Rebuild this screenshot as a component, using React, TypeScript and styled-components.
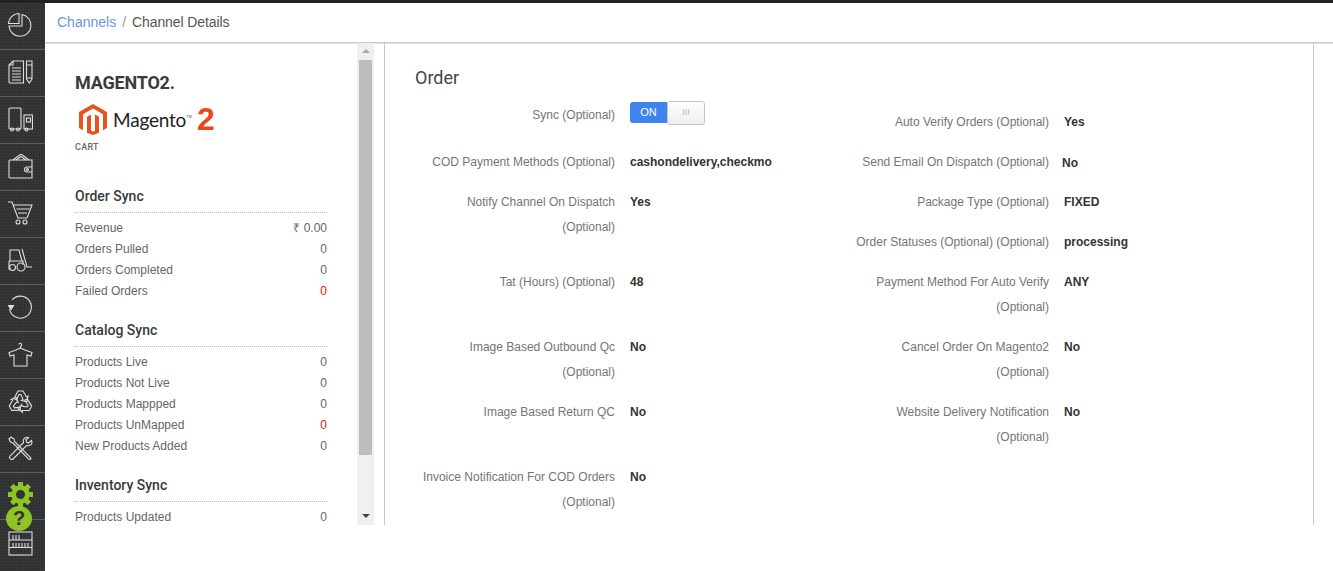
import React from "react";
import styled, { createGlobalStyle } from "styled-components";

const GlobalStyle = createGlobalStyle`
    html, body {
        margin: 0;
        height: 100%;
        overflow: hidden;
        background: #fff;
        font-family: "Liberation Sans", Arial, sans-serif;
    }
`

const Page = styled.div`
    display: flex;
    height: 571px;
    border-top: 3px solid #222;
    box-sizing: border-box;
`

const Rail = styled.nav`
    position: relative;
    width: 45px;
    flex-shrink: 0;
    background-color: #333436;
    background-image:
        repeating-linear-gradient(0deg, rgba(255,255,255,0.025) 0 1px, transparent 1px 3px),
        repeating-linear-gradient(90deg, rgba(0,0,0,0.12) 0 1px, transparent 1px 3px);
`

const RailItem = styled.div<{ $last?: boolean }>`
    display: flex;
    align-items: center;
    box-sizing: border-box;
    height: 47px;
    padding-left: 8px;
    border-bottom: ${(p) => (p.$last ? "none" : "1px solid #5e5f60")};
    color: #e0dde0;

    svg.line {
        width: 25px;
        height: 25px;
        margin-top: -1px;
        fill: none;
        stroke: currentColor;
        stroke-width: 1.1;
    }
`

const GearSvg = styled.svg`
    width: 25px;
    height: 25px;
    margin-top: -3px;
    fill: #8fc425;
`

const HelpBadge = styled.span`
    position: absolute;
    left: 6px;
    top: 503px;
    width: 26px;
    height: 25px;
    border-radius: 50%;
    background: #8fc425;
    color: #333;
    font-size: 20px;
    font-weight: bold;
    line-height: 25px;
    text-align: center;
`

const Main = styled.div`
    flex: 1;
    display: flex;
    flex-direction: column;
    min-width: 0;
`

const Breadcrumb = styled.header`
    display: flex;
    align-items: center;
    gap: 6px;
    box-sizing: border-box;
    height: 40px;
    padding: 0 0 2px 12px;
    border-bottom: 1px solid #c8c8c8;
    box-shadow: 0 1px 0 #e4e4e4;
    font-size: 14px;
    color: #555;
`

const CrumbLink = styled.a`
    color: #6d93e0;
`

const CrumbSlash = styled.span`
    color: #999;
`

const CrumbCurrent = styled.span`
    letter-spacing: -0.1px;
`

const Content = styled.div`
    display: flex;
    height: 482px;
`

const Side = styled.aside`
    width: 312px;
    box-sizing: border-box;
    padding: 29px 30px 0;
    overflow: hidden;
    flex-shrink: 0;
`

const ChannelName = styled.h1`
    margin: 0;
    font-family: Roboto, sans-serif;
    font-size: 18px;
    font-weight: 700;
    line-height: 21px;
    letter-spacing: -0.2px;
    color: #3a3a3a;
`

const Logo = styled.div`
    display: flex;
    align-items: center;
    height: 32px;
    margin: 10px 0 0 4px;
`

const LogoWord = styled.span`
    font-family: Lato, sans-serif;
    font-size: 19px;
    color: #222;
    margin-left: 6px;
    letter-spacing: -0.2px;
`

const LogoTm = styled.sup`
    font-size: 4px;
    color: #555;
    margin: -6px 0 0 0;
`

const LogoTwo = styled.span`
    font-family: "Liberation Sans", sans-serif;
    font-size: 32px;
    font-weight: bold;
    color: #e8491a;
    margin-left: 5px;
`

const Tag = styled.div`
    margin-top: 7px;
    font-family: Roboto, sans-serif;
    font-size: 9px;
    font-weight: 500;
    line-height: 11px;
    letter-spacing: 0.3px;
    color: #666;
`

const Section = styled.section`
    margin-top: 19px;
    &:first-of-type { margin-top: 34px; }
`

const SectionTitle = styled.h2`
    margin: 0 0 5px;
    padding-bottom: 7px;
    border-bottom: 1px dotted #bbb;
    font-family: Roboto, sans-serif;
    font-size: 14px;
    font-weight: 500;
    line-height: 18px;
    color: #3a3a3a;
`

const StatRow = styled.div`
    display: flex;
    justify-content: space-between;
    font-size: 12px;
    line-height: 21px;
    color: #666;
`

const StatValue = styled.span<{ $alert?: boolean }>`
    color: ${(p) => (p.$alert ? "#ee1010" : "#666")};
`

const Scrollbar = styled.div`
    display: flex;
    flex-direction: column;
    align-items: center;
    width: 17px;
    flex-shrink: 0;
    background: #f0f0f0;
`

const ScrollArrow = styled.span<{ $up?: boolean }>`
    width: 0;
    height: 0;
    margin: ${(p) => (p.$up ? "6px 0 3px" : "auto 0 7px")};
    border-left: 4px solid transparent;
    border-right: 4px solid transparent;
    ${(p) => (p.$up ? "border-bottom: 4px solid #a8a8a8;" : "border-top: 4px solid #444;")}
`

const ScrollThumb = styled.div`
    width: 13px;
    height: 395px;
    margin-top: 4px;
    background: #bdbdbd;
`

const Detail = styled.main`
    width: 930px;
    margin-left: 10px;
    box-sizing: border-box;
    padding: 22px 30px 0;
    border-left: 1px solid #c8c8c8;
    border-right: 1px solid #c8c8c8;
`

const DetailTitle = styled.h3`
    margin: 0;
    font-family: Roboto, sans-serif;
    font-size: 18px;
    font-weight: 400;
    line-height: 26px;
    color: #444;
`

const Columns = styled.div`
    display: grid;
    grid-template-columns: 357px 1fr;
`

const FormColumn = styled.div<{ $top: number; $indent?: number }>`
    padding-top: ${(p) => p.$top}px;
    padding-left: ${(p) => p.$indent ?? 0}px;
`

const Field = styled.div<{ $gap?: number }>`
    display: grid;
    grid-template-columns: 200px 1fr;
    column-gap: 15px;
    margin-bottom: ${(p) => p.$gap ?? 15}px;
    font-size: 12px;
    line-height: 25px;
`

const Label = styled.div`
    text-align: right;
    color: #757575;
`

const Value = styled.div<{ $shifted?: boolean }>`
    font-weight: bold;
    color: #333;
    ${(p) => p.$shifted && "margin: 1px 0 -1px -2px;"}
`

const Toggle = styled.div`
    display: flex;
    align-items: center;
    width: 75px;
    height: 25px;
    margin-top: -3px;
`

const ToggleOn = styled.span`
    width: 37px;
    height: 21px;
    border-radius: 3px 0 0 3px;
    background: #3d84ee;
    color: #fff;
    font-size: 11px;
    line-height: 21px;
    text-align: center;
`

const ToggleHandle = styled.span`
    width: 38px;
    height: 24px;
    box-sizing: border-box;
    border: 1px solid #c4c4c4;
    border-radius: 3px;
    background: linear-gradient(#fff, #eee);
    color: #bbb;
    font-size: 9px;
    line-height: 21px;
    text-align: center;
`

const Pie = () => (
    <svg className="line" viewBox="0 0 25 25">
        <path d="M11 .5v10H.5C.8 5 5 .8 11 .5z" />
        <path d="M14 1.500a11 11 0 1 1-13 11.500h13z" />
    </svg>
)
const Docs = () => (
    <svg className="line" viewBox="0 0 25 25">
        <path d="M5 1h10.500v22H2a1 1 0 0 1-1-1V5zM5 1v4H1" />
        <path d="M4 8h9M4 11h9M4 14h9M4 17h9M4 20h9" />
        <path d="M18.500 1h5.500v18l-2.700 4-2.800-4zM18.500 5h5.500M18.500 18h5.500" />
    </svg>
)
const Trucks = () => (
    <svg className="line" viewBox="0 0 25 25">
        <rect x="1" y="1" width="12" height="21" rx="1" />
        <circle cx="4" cy="22.500" r="1.500" />
        <circle cx="10" cy="22.500" r="1.500" />
        <rect x="16" y="8" width="8.500" height="14" />
        <rect x="18.500" y="11" width="4" height="4" />
        <circle cx="18.500" cy="22.500" r="1.500" />
    </svg>
)
const Wallet = () => (
    <svg className="line" viewBox="0 0 25 25">
        <path d="M1 7a1 1 0 0 1 1-1h22v18H2a1 1 0 0 1-1-1z" />
        <path d="M5 6l8-6 8 6M8 6l5-3.500L18 6" />
        <path d="M24 13h-5a2 2 0 0 0 0 5h5" />
        <circle cx="19.500" cy="15.500" r="1" />
    </svg>
)
const Cart = () => (
    <svg className="line" viewBox="0 0 25 25">
        <path d="M0 1h4l6 16h9l5-13H5" />
        <path d="M8.500 8h13M10 12h9" />
        <circle cx="10" cy="21" r="2" />
        <circle cx="17" cy="21" r="2" />
    </svg>
)
const Forklift = () => (
    <svg className="line" viewBox="0 0 25 25">
        <path d="M2 13V2h9l3 11M1 13h14v4M1 13v8h2" />
        <path d="M14 1l5 18h5" />
        <circle cx="4.500" cy="19.500" r="3" />
        <circle cx="13" cy="19" r="4" />
    </svg>
)
const Rotate = () => (
    <svg className="line" viewBox="0 0 25 25">
        <path d="M4 5a11 11 0 1 1-2.500 9" />
        <path d="M0.500 10.500h5L3 14.500z" fill="currentColor" />
    </svg>
)
const Shirt = () => (
    <svg className="line" viewBox="0 0 25 25">
        <path d="M12.500 6V4.500c1.600-.5 1.500-3.200-.2-3.200-1 0-1.500.6-1.500 1.300" />
        <path d="M12.500 6L8 8 1 10.500l1 3.500 4-1v11h13V13l4 1 1-3.500L17 8z" />
    </svg>
)
const RECYCLE_ARM = "M6 9.500L10 2h5l3.500 6 1.500-1-1 5.500-5.500-1 1.500-1L13 5.500h-2L8.500 11z"
const Recycle = () => (
    <svg className="line" viewBox="0 0 25 25">
        <path d={RECYCLE_ARM} />
        <path d={RECYCLE_ARM} transform="rotate(120 12.500 13.500)" />
        <path d={RECYCLE_ARM} transform="rotate(240 12.500 13.500)" />
    </svg>
)
const Tools = () => (
    <svg className="line" viewBox="0 0 25 25">
        <path d="M1 3l2-2 3 2 .5 2.500L22 21l1 1.500-1 1-1.500-.500L5 7 2.500 6z" />
        <path d="M23.500 4.500l-3 2.500-2-1-.5-2L20.500 1.500C17 .5 14.500 3.500 15.500 6.500L2 20c-1.500 2 1.500 4.500 3 3L18.500 9.500c3.500 1 6.500-1.500 5-5z" />
    </svg>
)
const Shelf = () => (
    <svg className="line" viewBox="0 0 25 25">
        <rect x="1" y="1" width="23" height="23" />
        <path d="M1 9h23M1 16.500h23" />
        <path d="M5 4v5M8 4v5M11 4v5M5 12v4.500M8 12v4.500M11 12v4.500M14 12v4.500M17 12v4.500M20 12v4.500" />
    </svg>
)

const Gear = () => (
    <GearSvg viewBox="0 0 25 25">
        <path
            fillRule="evenodd"
            d="M10 0h5v3.500l2 .8 2.500-2.500L23 5.300l-2.500 2.500.8 2.200H25v5h-3.700l-.8 2.200 2.500 2.500-3.500 3.500-2.500-2.500-2 .8V25h-5v-3.500l-2-.8-2.500 2.500L2 19.700l2.500-2.500-.8-2.200H0v-5h3.700l.8-2.200L2 5.300l3.500-3.500L8 4.300l2-.8zM12.500 8a4.500 4.500 0 1 0 0 9 4.500 4.500 0 0 0 0-9z"
        />
    </GearSvg>
)

const MagentoMark = () => (
    <svg width="28" height="31" viewBox="0 0 28 31">
        <path
            fill="#e8521d"
            d="M14 0L0 8v16l4 2.300V10.200l10-5.800 10 5.800v16.100l4-2.300V8zM16 26.600L14 27.800l-2-1.200V10.500L8 12.800v16L14 31l6-2.200v-16l-4-2.300z"
        />
    </svg>
)

const railIcons = [Pie, Docs, Trucks, Wallet, Cart, Forklift, Rotate, Shirt, Recycle, Tools]

const stats = [
    {
        title: "Order Sync",
        rows: [["Revenue", "₹ 0.00"], ["Orders Pulled", "0"], ["Orders Completed", "0"], ["Failed Orders", "0", true]],
    },
    {
        title: "Catalog Sync",
        rows: [["Products Live", "0"], ["Products Not Live", "0"], ["Products Mappped", "0"], ["Products UnMapped", "0", true], ["New Products Added", "0"]],
    },
    {
        title: "Inventory Sync",
        rows: [["Products Updated", "0"]],
    },
]

type FieldData = { label: string; value: string; gap?: number; shifted?: boolean }

const leftFields: FieldData[] = [
    { label: "COD Payment Methods (Optional)", value: "cashondelivery,checkmo" },
    { label: "Notify Channel On Dispatch (Optional)", value: "Yes", gap: 30 },
    { label: "Tat (Hours) (Optional)", value: "48", gap: 40 },
    { label: "Image Based Outbound Qc (Optional)", value: "No" },
    { label: "Image Based Return QC", value: "No", gap: 40 },
    { label: "Invoice Notification For COD Orders (Optional)", value: "No" },
]

const rightFields: FieldData[] = [
    { label: "Auto Verify Orders (Optional)", value: "Yes" },
    { label: "Send Email On Dispatch (Optional)", value: "No", shifted: true },
    { label: "Package Type (Optional)", value: "FIXED" },
    { label: "Order Statuses (Optional) (Optional)", value: "processing" },
    { label: "Payment Method For Auto Verify (Optional)", value: "ANY" },
    { label: "Cancel Order On Magento2 (Optional)", value: "No" },
    { label: "Website Delivery Notification (Optional)", value: "No" },
]

const App = () => {
    return (
        <Page>
            <GlobalStyle />
            <Rail>
                {railIcons.map((Icon, i) => (
                    <RailItem key={i}><Icon /></RailItem>
                ))}
                <RailItem><Gear /></RailItem>
                <RailItem $last><Shelf /></RailItem>
                <HelpBadge>?</HelpBadge>
            </Rail>
            <Main>
                <Breadcrumb>
                    <CrumbLink>Channels</CrumbLink>
                    <CrumbSlash>/</CrumbSlash>
                    <CrumbCurrent>Channel Details</CrumbCurrent>
                </Breadcrumb>
                <Content>
                    <Side>
                        <ChannelName>MAGENTO2.</ChannelName>
                        <Logo>
                            <MagentoMark />
                            <LogoWord>Magento</LogoWord>
                            <LogoTm>TM</LogoTm>
                            <LogoTwo>2</LogoTwo>
                        </Logo>
                        <Tag>CART</Tag>
                        {stats.map((s) => (
                            <Section key={s.title}>
                                <SectionTitle>{s.title}</SectionTitle>
                                {s.rows.map((r) => (
                                    <StatRow key={r[0] as string}>
                                        <span>{r[0]}</span>
                                        <StatValue $alert={!!r[2]}>{r[1]}</StatValue>
                                    </StatRow>
                                ))}
                            </Section>
                        ))}
                    </Side>
                    <Scrollbar>
                        <ScrollArrow $up />
                        <ScrollThumb />
                        <ScrollArrow />
                    </Scrollbar>
                    <Detail>
                        <DetailTitle>Order</DetailTitle>
                        <Columns>
                            <FormColumn $top={12}>
                                <Field $gap={22}>
                                    <Label>Sync (Optional)</Label>
                                    <Toggle>
                                        <ToggleOn>ON</ToggleOn>
                                        <ToggleHandle>III</ToggleHandle>
                                    </Toggle>
                                </Field>
                                {leftFields.map((f) => (
                                    <Field key={f.label} $gap={f.gap}>
                                        <Label>{f.label}</Label>
                                        <Value>{f.value}</Value>
                                    </Field>
                                ))}
                            </FormColumn>
                            <FormColumn $top={19} $indent={77}>
                                {rightFields.map((f) => (
                                    <Field key={f.label} $gap={f.gap}>
                                        <Label>{f.label}</Label>
                                        <Value $shifted={f.shifted}>{f.value}</Value>
                                    </Field>
                                ))}
                            </FormColumn>
                        </Columns>
                    </Detail>
                </Content>
            </Main>
        </Page>
    )
}

export default App
